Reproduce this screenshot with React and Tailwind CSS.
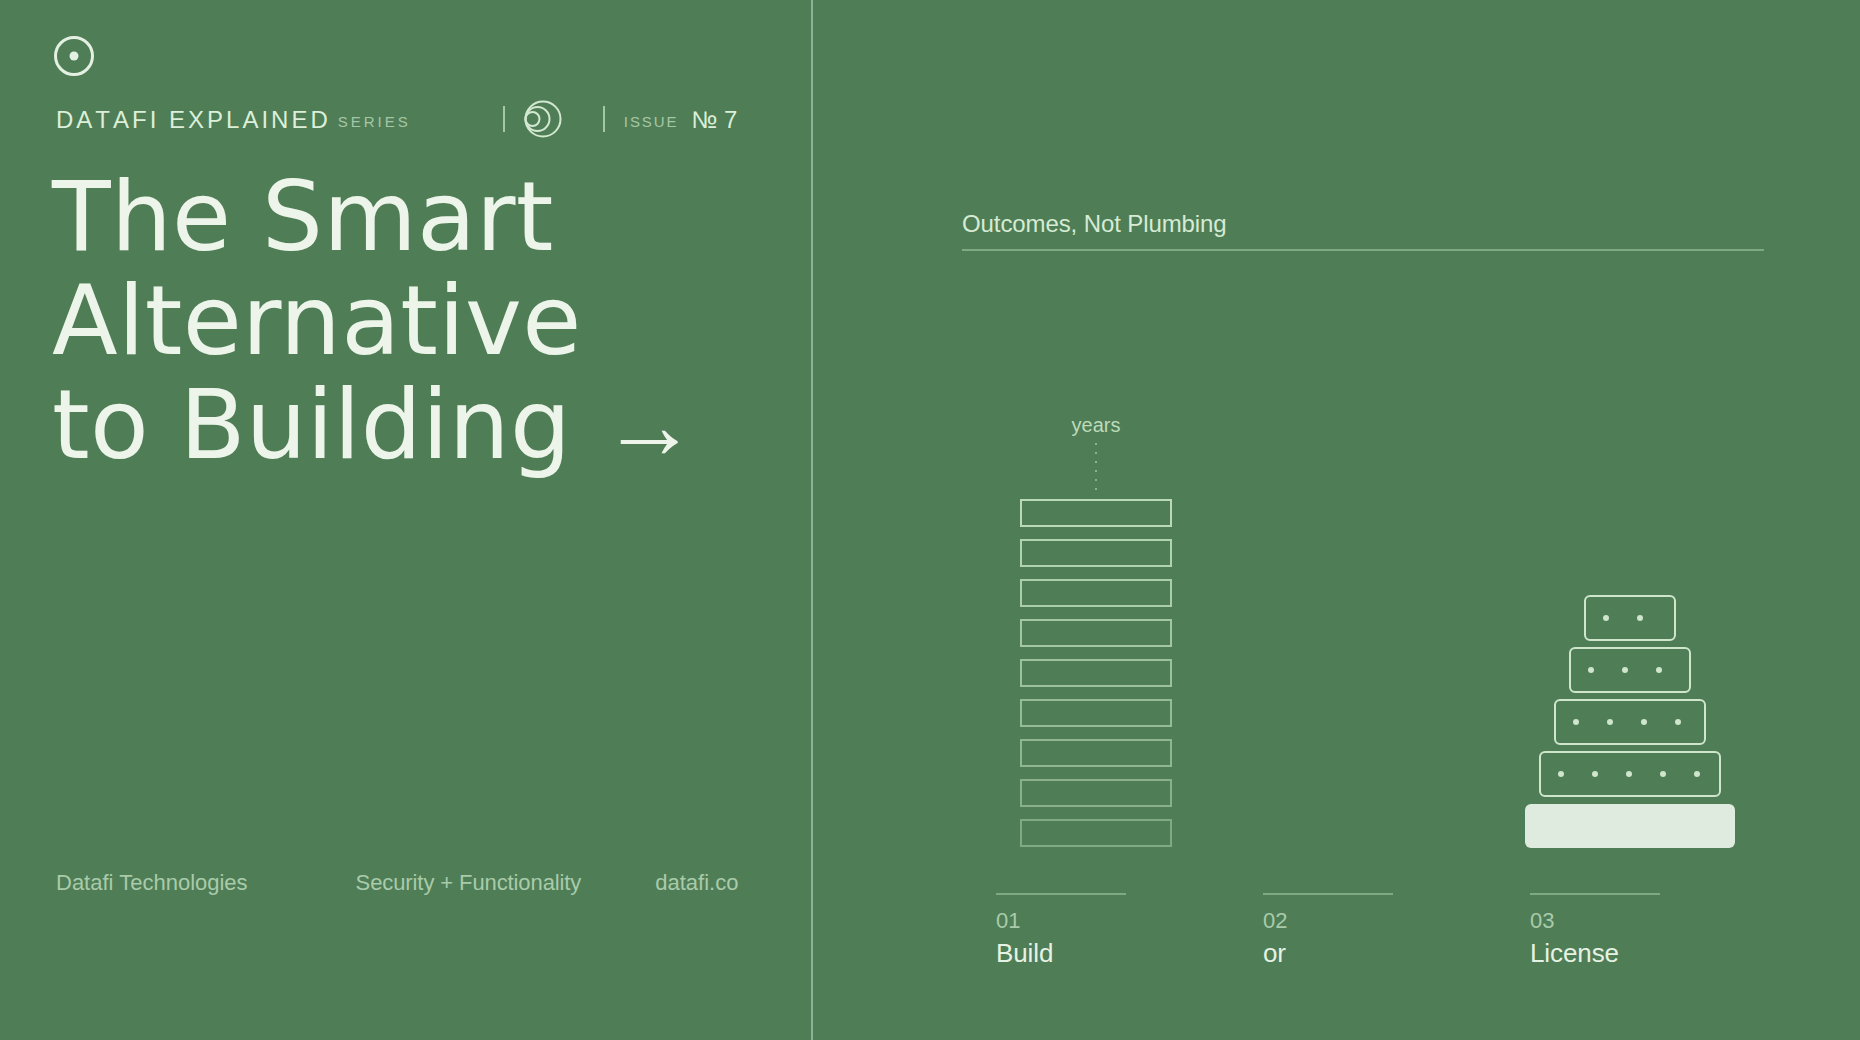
const sans = { fontFamily: '"Liberation Sans", Arial, sans-serif' };

const LogoMark = () => (
  <svg width="40" height="40" viewBox="0 0 40 40" fill="none" className="block">
    <circle cx="20" cy="20" r="18.5" stroke="#e4f0e1" strokeWidth="3" />
    <circle cx="20" cy="20" r="4.5" fill="#e4f0e1" />
  </svg>
);

const RingsMark = () => (
  <svg width="38" height="38" viewBox="0 0 38 38" fill="none" className="block">
    <circle cx="19" cy="19" r="17.5" stroke="#d3e8d0" strokeWidth="2" />
    <circle cx="13.5" cy="19" r="12" stroke="#d3e8d0" strokeWidth="2" />
    <circle cx="8.5" cy="19" r="7" stroke="#d3e8d0" strokeWidth="2" />
  </svg>
);

const Pill = ({ dots }) => (
  <div
    className="h-[46px] rounded-md border-2 border-[#cfe6cc] flex items-center gap-[28px] pl-[17px]"
    style={{ width: 32 + dots * 30 }}
  >
    {Array.from({ length: dots }).map((_, i) => (
      <span key={i} className="w-[6px] h-[6px] rounded-full bg-[#cfe6cc]" />
    ))}
  </div>
);

const Step = ({ num, label }) => (
  <div>
    <div className="w-[130px] h-[2px] bg-[#7fa884]" />
    <div className="mt-[13px] text-[22px] leading-[26px] text-[#a9cbaa]">{num}</div>
    <div className="mt-[3px] text-[26px] leading-[32px] tracking-[-0.1px] text-[#e6f2e3]">{label}</div>
  </div>
);

export default function App() {
  return (
    <div className="w-[1860px] h-[1040px] flex overflow-hidden bg-[#4f7d56]" style={sans}>
      {/* left panel */}
      <div className="w-[813px] h-full shrink-0 border-r-2 border-[#8fb294] pl-[56px] pt-[36px] pb-[144px] flex flex-col">
        <div className="-ml-[2px]">
          <LogoMark />
        </div>

        <div className="mt-[25px] h-[36px] flex items-center [font-kerning:none]">
          <span className="mt-[2px] text-[24px] tracking-[3px] leading-none text-[#dcefd9]">DATAFI EXPLAINED</span>
          <span className="ml-[7px] mt-[5px] text-[15px] tracking-[0.2em] leading-none text-[#a5c7a6]">SERIES</span>
          <div className="ml-[92px] w-[2px] h-[26px] bg-[#a5c7a6]" />
          <div className="ml-[19px]">
            <RingsMark />
          </div>
          <div className="ml-[41px] w-[2px] h-[26px] bg-[#a5c7a6]" />
          <span className="ml-[19px] mt-[5px] text-[15px] tracking-[0.13em] leading-none text-[#a5c7a6]">ISSUE</span>
          <span className="ml-[13px] mt-[2px] text-[24px] leading-none text-[#dcefd9]">№ 7</span>
        </div>

        <h1
          className="mt-[28px] -ml-[4px] text-[96px] leading-[104px] tracking-[0.25px] font-normal text-[#edf5ea]"
          style={{ fontFamily: '"DejaVu Sans", sans-serif' }}
        >
          The Smart
          <br />
          Alternative
          <br />
          to Building
          <span className="ml-[30px]" style={sans}>→</span>
        </h1>

        <div className="mt-auto flex text-[22px] leading-[26px] text-[#a9cbaa]">
          <span>Datafi Technologies</span>
          <span className="ml-[108px] tracking-[-0.1px]">Security + Functionality</span>
          <span className="ml-[74px]">datafi.co</span>
        </div>
      </div>

      {/* right panel */}
      <div className="flex-1 pl-[149px] pr-[96px] pt-[209px]">
        <div className="pb-[10px] border-b-2 border-[#7fa884] text-[24px] leading-[30px] tracking-[-0.1px] text-[#d6ebd3]">
          Outcomes, Not Plumbing
        </div>

        <div className="ml-[34px] mt-[160px] grid grid-cols-[200px_200px_200px] gap-x-[67px] items-end h-[436px]">
          <div className="flex flex-col items-center">
            <div className="text-[20px] leading-[24px] text-[#bddbbb]">years</div>
            <div className="mt-[6px] mb-[9px] flex flex-col gap-[7px]">
              {Array.from({ length: 6 }).map((_, i) => (
                <span key={i} className="w-[2px] h-[2px] bg-[#8fb294]" />
              ))}
            </div>
            <div className="flex flex-col gap-[12px]">
              {Array.from({ length: 9 }).map((_, i) => (
                <div
                  key={i}
                  className="w-[152px] h-[28px] border-2 border-[#b9d9b7]"
                  style={{ opacity: 1 - i * 0.065 }}
                />
              ))}
            </div>
          </div>

          <div />

          <div className="flex flex-col items-center gap-[6px] -mb-[1px]">
            <Pill dots={2} />
            <Pill dots={3} />
            <Pill dots={4} />
            <Pill dots={5} />
            <div className="mt-[1px] w-[210px] h-[44px] rounded-md bg-[#e0ebdf]" />
          </div>
        </div>

        <div className="ml-[34px] mt-[46px] grid grid-cols-[200px_200px_200px] gap-x-[67px]">
          <Step num="01" label="Build" />
          <Step num="02" label="or" />
          <Step num="03" label="License" />
        </div>
      </div>
    </div>
  );
}
